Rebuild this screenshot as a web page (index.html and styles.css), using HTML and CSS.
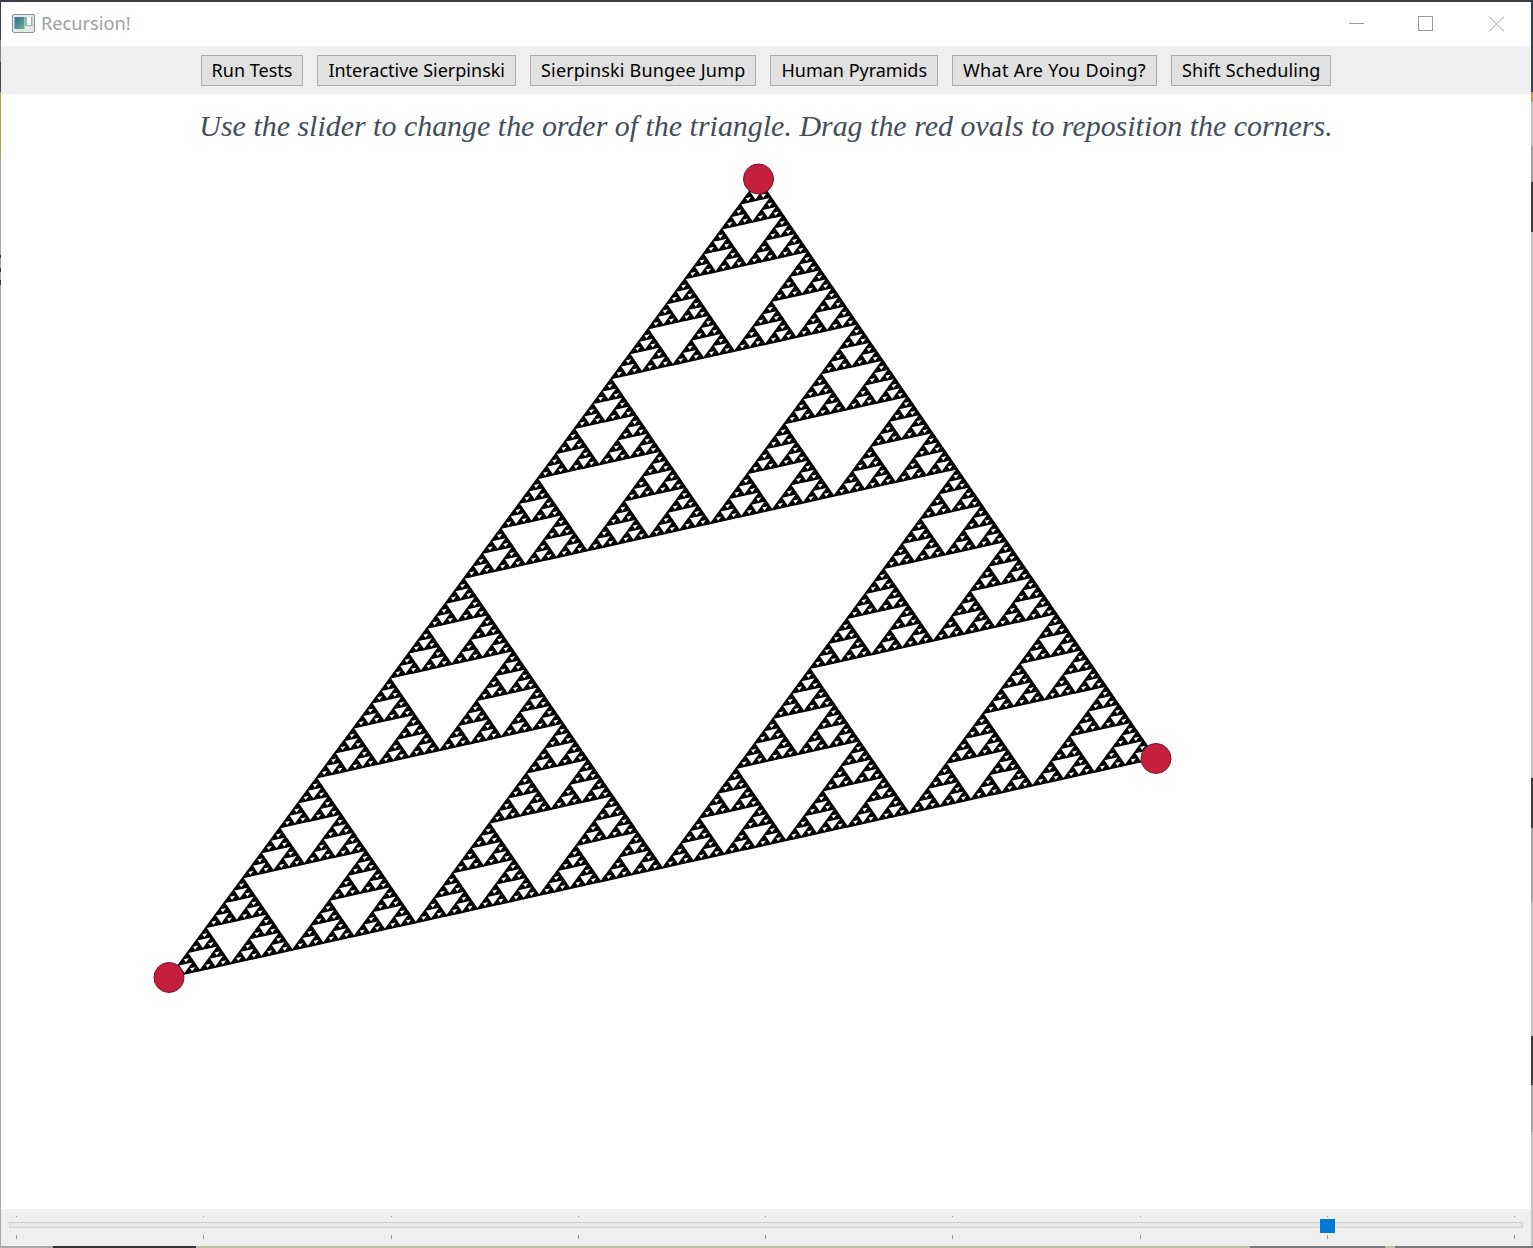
FILE: index.html
```html
<!DOCTYPE html>
<html>
<head>
<meta charset="UTF-8">
<title>Recursion!</title>
<link rel="stylesheet" href="styles.css">
<script src="sierpinski.js" defer></script>
</head>
<body>
<div class="window">
    <div class="edge edgeLeft"></div>
    <div class="edge edgeRight"></div>
    <div class="edge edgeBottom"></div>

    <div class="titleBar">
        <div class="titleLeft">
            <svg class="appIcon" width="24" height="20" viewBox="0 0 24 20">
                <defs>
                    <linearGradient id="appGrad" x1="0" y1="0" x2="1" y2="1">
                        <stop offset="0" stop-color="#2f6fa8"/>
                        <stop offset="1" stop-color="#6cb07a"/>
                    </linearGradient>
                </defs>
                <rect x="0.5" y="0.5" width="22" height="18" rx="1.5" fill="#e4e8ea" stroke="#8a9096"/>
                <rect x="2.5" y="3" width="10" height="12" fill="url(#appGrad)"/>
                <rect x="13" y="3" width="7.5" height="9" fill="#8fb8a4"/>
                <rect x="15" y="3" width="4" height="8" fill="#fff"/>
            </svg>
            <span class="titleText">Recursion!</span>
        </div>
        <div class="winButtons">
            <svg class="winBtn" width="16" height="16" viewBox="0 0 16 16"><path d="M1 7.5H16" stroke="#999" fill="none"/></svg>
            <svg class="winBtn" width="16" height="16" viewBox="0 0 16 16"><rect x="0.5" y="0.5" width="14" height="14" stroke="#999" fill="none"/></svg>
            <svg class="winBtn" width="16" height="16" viewBox="0 0 16 16"><path d="M1 0.5L16 15.5M16 0.5L1 15.5" stroke="#999" fill="none"/></svg>
        </div>
    </div>

    <div class="toolbar">
        <button class="btn">Run Tests</button>
        <button class="btn">Interactive Sierpinski</button>
        <button class="btn btnBungee">Sierpinski Bungee Jump</button>
        <button class="btn">Human Pyramids</button>
        <button class="btn btnDoing">What Are You Doing?</button>
        <button class="btn btnShift">Shift Scheduling</button>
    </div>

    <div class="canvas">
        <p class="prompt">Use the slider to change the order of the triangle. Drag the red ovals to reposition the corners.</p>
        <svg class="drawing" id="drawing" width="1533" height="1115" viewBox="0 94 1533 1115">
            <path id="triangles" fill="#000" stroke="#000" stroke-width="1.25"/>
            <circle class="corner" cx="758.5" cy="179" r="15"/>
            <circle class="corner" cx="1156" cy="758.5" r="15"/>
            <circle class="corner" cx="169" cy="977.5" r="15"/>
        </svg>
    </div>

    <div class="sliderBar">
        <div class="ticks ticksTop">
            <i></i><i></i><i></i><i></i><i></i><i></i><i></i><i></i><i></i>
        </div>
        <div class="track"><div class="thumb"></div></div>
        <div class="ticks ticksBottom">
            <i></i><i></i><i></i><i></i><i></i><i></i><i></i><i></i><i></i>
        </div>
    </div>
</div>
</body>
</html>
```

FILE: styles.css
```css
html, body {
    margin: 0;
    padding: 0;
    background: #fff;
}

.window {
    position: relative;
    width: 1533px;
    height: 1248px;
    box-sizing: border-box;
    display: flex;
    flex-direction: column;
    padding: 0 2px 2px 1px;
    border-top: 2px solid #3a3d46;
    overflow: hidden;
}

/* the desktop showing round the window */
.edge {
    position: absolute;
}

.edgeLeft {
    left: 0;
    top: 0;
    bottom: 0;
    width: 1px;
    background: linear-gradient(to bottom,
        #3a4450 0 38px, #8a8078 38px 60px, #3a4450 60px 90px,
        #b5a050 90px 155px, #a8a8a8 155px 253px, #3a3a3a 253px 256px,
        #a8a8a8 256px 266px, #3a3a3a 266px 270px, #a8a8a8 270px 278px,
        #3a3a3a 278px 283px, #a8a8a8 283px);
}

.edgeRight {
    right: 0;
    top: 0;
    bottom: 0;
    width: 2px;
    background: linear-gradient(to bottom,
        #3a4450 0 90px, #b5a050 90px 100px, #c4c4c4 100px 144px,
        #a0a0a0 144px 180px, #3c3c3c 180px 230px, #c4c4c4 230px 776px,
        #3c3c3c 776px 826px, #a8a8a8 826px 900px, #c4c4c4 900px 1034px,
        #3c3c3c 1034px 1083px, #a8a8a8 1083px 1130px, #c4c4c4 1130px);
}

.edgeBottom {
    left: 0;
    right: 0;
    bottom: 0;
    height: 2px;
    background: linear-gradient(to right,
        #a8a8a8 0 53px, #333 53px 196px, #c0c0a8 196px 1250px,
        #7a7a7a 1250px 1385px, #c0c0a8 1385px 1395px, #7a7a7a 1395px);
}

.titleBar {
    height: 44px;
    flex: none;
    display: flex;
    align-items: center;
    justify-content: space-between;
    background: #fff;
}

.titleLeft {
    display: flex;
    align-items: center;
    padding-left: 11px;
}

.appIcon {
    margin-right: 5px;
}

.titleText {
    padding-bottom: 2px;
    font: 18.2px "Noto Sans", "Open Sans", sans-serif;
    color: #a0a0a0;
}

.winButtons {
    display: flex;
    gap: 54px;
    padding-right: 27px;
}

.toolbar {
    height: 48px;
    flex: none;
    display: flex;
    align-items: center;
    justify-content: center;
    gap: 14px;
    background: #efefef;
}

.btn {
    height: 31px;
    padding: 0 10px;
    border: 1px solid #adadad;
    background: #e1e1e1;
    color: #000;
    font: 18px "Noto Sans", "Open Sans", sans-serif;
    white-space: nowrap;
}

.btnBungee {
    letter-spacing: 0.18px;
}

.btnDoing {
    letter-spacing: 0.3px;
}

.btnShift {
    letter-spacing: 0.12px;
}

.canvas {
    flex: 1;
    position: relative;
    background: #fff;
}

.prompt {
    margin: 0;
    padding-top: 15px;
    text-align: center;
    font: italic 29.95px "Liberation Serif", serif;
    color: #454d58;
}

.drawing {
    position: absolute;
    left: -1px;
    top: 0;
}

.corner {
    fill: #c41e3d;
    stroke: #7a1428;
    stroke-width: 1;
}

.sliderBar {
    height: 37px;
    flex: none;
    box-sizing: border-box;
    padding: 7px 8px 0 8px;
    background: #efefef;
}

.ticks {
    display: flex;
    justify-content: space-between;
    padding: 0 8px 0 7px;
}

.ticks i {
    display: block;
    width: 1px;
    background: #9c9c8c;
}

.ticksTop i {
    height: 1px;
}

.ticksBottom {
    margin-top: 7px;
}

.ticksBottom i {
    height: 4px;
}

.track {
    position: relative;
    height: 4px;
    margin-top: 5px;
    border: 1px solid #d2d2d2;
    background: #e4e7e9;
}

.thumb {
    position: absolute;
    left: 1310px;
    top: -4px;
    width: 15px;
    height: 14px;
    background: #0078d7;
}
```

FILE: sierpinski.js
```js
var parts = [];

function triangle(ax, ay, bx, by, cx, cy, order) {
    if (order == 0) {
        parts.push("M" + ax + " " + ay + "L" + bx + " " + by + "L" + cx + " " + cy + "Z");
        return;
    }
    var abx = (ax + bx) / 2, aby = (ay + by) / 2;
    var bcx = (bx + cx) / 2, bcy = (by + cy) / 2;
    var cax = (cx + ax) / 2, cay = (cy + ay) / 2;
    triangle(ax, ay, abx, aby, cax, cay, order - 1);
    triangle(abx, aby, bx, by, bcx, bcy, order - 1);
    triangle(cax, cay, bcx, bcy, cx, cy, order - 1);
}

// slider sits on 7, corners are the three ovals
triangle(758.5, 179, 1156, 758.5, 169, 977.5, 7);
document.getElementById("triangles").setAttribute("d", parts.join(""));
```
